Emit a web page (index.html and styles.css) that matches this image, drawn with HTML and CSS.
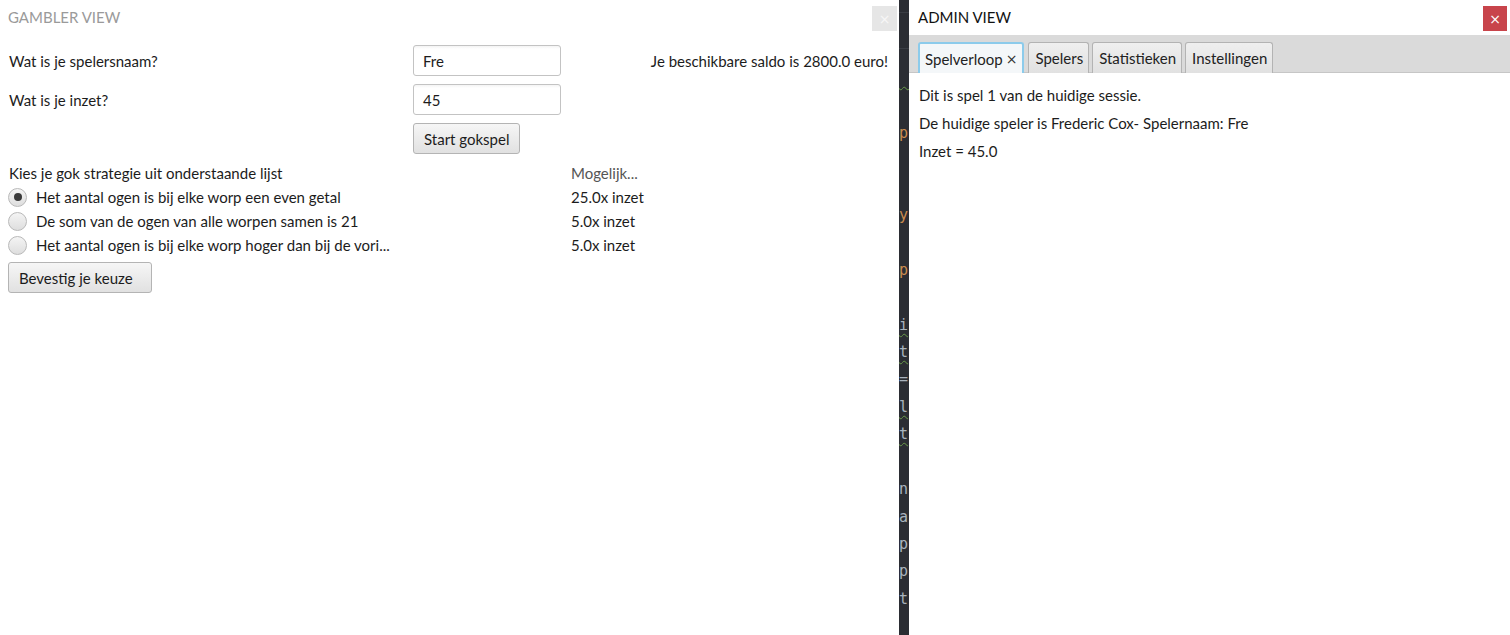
FILE: index.html
```html
<!DOCTYPE html>
<html lang="nl">
<head>
<meta charset="utf-8">
<title>Gokspel</title>
<link rel="stylesheet" href="styles.css">
</head>
<body>
<div class="screen">
  <section class="win gambler">
    <header class="titlebar">
      <span class="title inactive">GAMBLER VIEW</span>
      <span class="winclose light">×</span>
    </header>
    <div class="gambler-body">
      <div class="form-grid">
        <div class="lbl">Wat is je spelersnaam?</div>
        <div class="field">Fre</div>
        <div class="saldo">Je beschikbare saldo is 2800.0 euro!</div>
        <div class="lbl">Wat is je inzet?</div>
        <div class="field">45</div>
        <div></div>
        <div></div>
        <div><span class="btn">Start gokspel</span></div>
        <div></div>
      </div>
      <div class="strategy-grid">
        <div>Kies je gok strategie uit onderstaande lijst</div>
        <div class="muted">Mogelijk...</div>
        <div class="radio"><span class="circle checked"></span>Het aantal ogen is bij elke worp een even getal</div>
        <div>25.0x inzet</div>
        <div class="radio"><span class="circle"></span>De som van de ogen van alle worpen samen is 21</div>
        <div>5.0x inzet</div>
        <div class="radio"><span class="circle"></span>Het aantal ogen is bij elke worp hoger dan bij de vori...</div>
        <div>5.0x inzet</div>
      </div>
      <span class="btn confirm">Bevestig je keuze</span>
    </div>
  </section>

  <div class="strip">
    <div class="strip-top"></div>
    <div class="strip-tabs"></div>
    <div class="code">
      <div><span class="squig">&nbsp;&nbsp;</span></div>
      <div>&nbsp;</div>
      <div class="kw">p</div>
      <div>&nbsp;</div>
      <div>&nbsp;</div>
      <div class="kw">y</div>
      <div>&nbsp;</div>
      <div class="kw">p</div>
      <div>&nbsp;</div>
      <div><span class="squig">i</span></div>
      <div><span class="squig">t</span></div>
      <div>=</div>
      <div><span class="squig">l</span></div>
      <div><span class="squig">t</span></div>
      <div>&nbsp;</div>
      <div>n</div>
      <div>a</div>
      <div>p</div>
      <div>p</div>
      <div>t</div>
    </div>
  </div>

  <section class="win admin">
    <header class="titlebar">
      <span class="title">ADMIN VIEW</span>
      <span class="winclose red">×</span>
    </header>
    <nav class="tabs">
      <span class="tab selected">Spelverloop<span class="tabx">×</span></span>
      <span class="tab">Spelers</span>
      <span class="tab">Statistieken</span>
      <span class="tab">Instellingen</span>
    </nav>
    <div class="tab-content">
      <p>Dit is spel 1 van de huidige sessie.</p>
      <p>De huidige speler is Frederic Cox- Spelernaam: Fre</p>
      <p>Inzet = 45.0</p>
    </div>
  </section>
</div>
</body>
</html>
```

FILE: styles.css
```css
html, body {
  margin: 0;
  padding: 0;
  background: #fff;
}

body {
  font-family: "Lato", "Open Sans", sans-serif;
  font-size: 15px;
  color: #1c1c1c;
}

.screen {
  display: flex;
  width: 1510px;
  height: 635px;
  overflow: hidden;
}

.win {
  background: #fff;
  display: flex;
  flex-direction: column;
}

.gambler {
  width: 899px;
  flex: none;
}

.admin {
  flex: 1;
}

.titlebar {
  height: 36px;
  flex: none;
  display: flex;
  justify-content: space-between;
  align-items: flex-start;
  box-sizing: border-box;
}

.gambler .titlebar {
  padding: 0 2px 0 8px;
}

.admin .titlebar {
  padding: 0 3px 0 9px;
  height: 35px;
}

.title {
  line-height: 34px;
  color: #111;
}

.title.inactive {
  color: #9a9a9a;
}

.winclose {
  margin-top: 6px;
  width: 25px;
  height: 25px;
  display: flex;
  align-items: center;
  justify-content: center;
  font-family: "DejaVu Sans", sans-serif;
  font-size: 14px;
  line-height: 1;
}

.winclose.light {
  background: #e6e6e6;
  color: #f7f7f7;
}

.winclose.red {
  width: 24px;
  background: #c8444b;
  color: #fff;
}

/* Gambler view */

.gambler-body {
  padding: 9px 11px 0 9px;
}

.form-grid {
  display: grid;
  grid-template-columns: 404px 148px 1fr;
  grid-auto-rows: 31px;
  row-gap: 8px;
  align-items: center;
}

.saldo {
  text-align: right;
}

.field {
  height: 31px;
  box-sizing: border-box;
  border: 1px solid #c3c3c3;
  border-radius: 3px;
  padding: 0 9px;
  display: flex;
  align-items: center;
  background: linear-gradient(#f4f4f4, #fff 3px);
}

.btn {
  display: inline-flex;
  align-items: center;
  height: 31px;
  box-sizing: border-box;
  padding: 0 10px;
  border: 1px solid #b4b4b4;
  border-radius: 3px;
  background: linear-gradient(#f6f6f6, #e1e1e1);
  color: #1c1c1c;
}

.strategy-grid {
  margin-top: 7px;
  display: grid;
  grid-template-columns: 562px 1fr;
  grid-auto-rows: 24px;
  align-items: center;
}

.muted {
  color: #555;
}

.radio {
  display: flex;
  align-items: center;
}

.circle {
  width: 19px;
  height: 19px;
  box-sizing: border-box;
  border-radius: 50%;
  border: 1px solid #b9b9b9;
  background: linear-gradient(#f4f4f4, #dedede);
  margin-right: 9px;
  margin-left: -1px;
  display: flex;
  align-items: center;
  justify-content: center;
}

.circle.checked::after {
  content: "";
  width: 8px;
  height: 8px;
  border-radius: 50%;
  background: #3a3a3a;
}

.confirm {
  margin-top: 5px;
  margin-left: -1px;
  padding-right: 18px;
}

/* editor strip */

.strip {
  width: 10px;
  flex: none;
  background: #2b2d33;
  overflow: hidden;
  font-family: "DejaVu Sans Mono", monospace;
  font-size: 15px;
  color: #a9b3bd;
}

.strip-top {
  height: 12px;
  border-bottom: 1px solid #3a3d44;
}

.strip-tabs {
  height: 35px;
  border-bottom: 1px solid #3a3d44;
}

.code {
  padding-top: 16px;
  line-height: 27.4px;
  white-space: nowrap;
}

.code .kw {
  color: #c98b4f;
}

.squig {
  text-decoration: underline wavy #6a9a4a;
  text-decoration-thickness: 1px;
  text-underline-offset: 3px;
}

/* Admin view */

.tabs {
  height: 38px;
  box-sizing: border-box;
  background: #dadada;
  border-bottom: 1px solid #c6c6c6;
  display: flex;
  align-items: flex-end;
  gap: 3px;
  padding-left: 9px;
}

.tab {
  height: 31px;
  box-sizing: border-box;
  margin-bottom: -1px;
  padding: 0 5px 0 6px;
  display: flex;
  align-items: center;
  border: 1px solid #b3b3b3;
  border-bottom: none;
  border-radius: 3px 3px 0 0;
  background: linear-gradient(#efefef, #e1e1e1);
  color: #222;
}

.tab.selected {
  margin-right: 1px;
  background: #f4f7f9;
  border: 2px solid #8ccbeb;
  border-bottom: none;
  padding: 0 5px 0 5px;
}

.tabx {
  font-family: "DejaVu Sans", sans-serif;
  font-size: 14px;
  margin-left: 3px;
  color: #333;
}

.tab-content {
  padding: 8px 10px;
}

.tab-content p {
  margin: 0;
  line-height: 28px;
}
```
